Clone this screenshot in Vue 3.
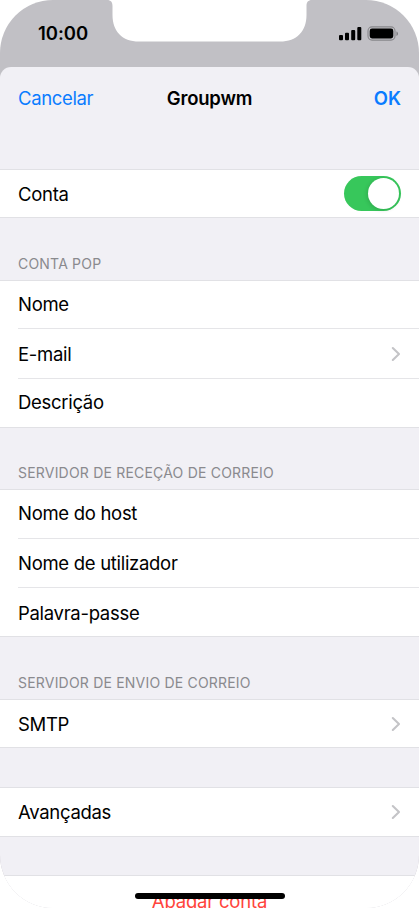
<script setup>
const groups = [
  { gap: 'g-first', title: '', rows: [{ label: 'Conta', kind: 'toggle', cls: 'r47' }] },
  {
    gap: 'g62', title: 'CONTA POP',
    rows: [
      { label: 'Nome', cls: 'r47 up' },
      { label: 'E-mail', kind: 'link', cls: 'r49' },
      { label: 'Descrição', cls: 'r48 up' },
    ],
  },
  {
    gap: 'g61', title: 'SERVIDOR DE RECEÇÃO DE CORREIO',
    rows: [
      { label: 'Nome do host', cls: 'r48 up' },
      { label: 'Nome de utilizador', cls: 'r48' },
      { label: 'Palavra-passe', cls: 'r48 down' },
    ],
  },
  { gap: 'g62', title: 'SERVIDOR DE ENVIO DE CORREIO', rows: [{ label: 'SMTP', kind: 'link', cls: 'r47' }] },
  { gap: 'g39', title: '', rows: [{ label: 'Avançadas', kind: 'link', cls: 'r48' }] },
]
</script>

<template>
  <div class="phone">
    <svg class="notch" width="210" height="43" viewBox="0 0 210 43">
      <path d="M2 0C6 0 7.500 2.200 7.500 6V15C7.500 31 17 41.600 34 41.600H175C192 41.600 201.500 31 201.500 15V6C201.500 2.200 203 0 207 0Z" fill="#fff" />
    </svg>
    <header class="status">
      <span class="time">10:00</span>
      <svg class="indicators" width="60" height="16" viewBox="0 0 60 16">
        <rect x="0" y="9" width="4" height="5.200" rx="1" />
        <rect x="6" y="6.800" width="4" height="7.400" rx="1" />
        <rect x="12.200" y="4" width="4" height="10.200" rx="1" />
        <rect x="18.300" y="0.900" width="4" height="13.300" rx="1" />
        <rect x="29" y="0.900" width="27" height="13.200" rx="4" fill="none" stroke="#87868a" stroke-width="1.100" />
        <rect x="30.700" y="2.600" width="23.600" height="9.800" rx="2.300" />
        <path d="M57.500 5.500C59.400 6.200 59.400 9.200 57.500 9.900Z" fill="#77767a" />
      </svg>
    </header>
    <main class="sheet">
      <nav class="bar">
        <span class="cancel">Cancelar</span>
        <h1>Groupwm</h1>
        <span class="ok">OK</span>
      </nav>
      <section v-for="(g, i) in groups" :key="i">
        <div class="gap" :class="g.gap"><h2 v-if="g.title">{{ g.title }}</h2></div>
        <div class="card">
          <template v-for="(r, j) in g.rows" :key="r.label">
            <div v-if="j" class="sep"></div>
            <div class="row" :class="r.cls">
              <span class="label">{{ r.label }}</span>
              <span v-if="r.kind === 'toggle'" class="toggle"><i></i></span>
              <svg v-if="r.kind === 'link'" class="chev" width="10" height="16" viewBox="0 0 10 16">
                <path d="M1.800 2L8 8L1.800 14" fill="none" stroke="#c4c4c7" stroke-width="2.100" stroke-linecap="round" stroke-linejoin="round" />
              </svg>
            </div>
          </template>
        </div>
      </section>
      <div class="gap g38"></div>
      <div class="card last"><span>Apagar conta</span></div>
    </main>
    <div class="home"></div>
  </div>
</template>

<style>
body { background: #fff; }
</style>

<style scoped>
.phone {
  position: relative;
  width: 419px;
  height: 908px;
  overflow: hidden;
  border-radius: 53px;
  background: #c1c0c5;
  font-family: Inter, "Liberation Sans", sans-serif;
  font-size: 18.5px;
  letter-spacing: -0.3px;
  color: #000;
  white-space: nowrap;
}
.notch { position: absolute; left: 105px; top: 0; }
.status {
  box-sizing: border-box;
  height: 67px;
  padding: 22px 20px 0 38px;
  display: flex;
  justify-content: space-between;
  align-items: flex-start;
}
.time { font-weight: 600; line-height: 23px; letter-spacing: -0.05px; }
.indicators { margin-top: 3.500px; }
.sheet { height: 841px; background: #f1f0f5; border-radius: 11px 11px 0 0; }
.bar {
  box-sizing: border-box;
  height: 63px;
  padding: 0 18px 2px;
  display: grid;
  grid-template-columns: 1fr auto 1fr;
  align-items: center;
}
.cancel, .ok { color: #0a7cff; }
.cancel { letter-spacing: -0.35px; }
.ok { font-weight: 600; text-align: right; letter-spacing: 0; }
h1 { margin: 0; font-size: 18.5px; font-weight: 600; letter-spacing: -0.2px; }
.gap { box-sizing: border-box; padding: 0 18px 8px; display: flex; align-items: flex-end; }
.g-first { height: 39px; }
.g62 { height: 62px; }
.g61 { height: 61px; }
.g39 { height: 39px; }
.g38 { height: 38px; }
h2 { margin: 0; font-size: 14px; line-height: 17px; font-weight: 400; letter-spacing: 0.2px; color: #8a8a8e; }
.card { background: #fff; border-top: 1px solid #e1e1e5; border-bottom: 1px solid #e1e1e5; }
.row {
  box-sizing: border-box;
  padding: 0 18px;
  display: flex;
  align-items: center;
  justify-content: space-between;
}
.r47 { height: 47px; }
.r48 { height: 48px; }
.r49 { height: 49px; }
.up { padding-bottom: 2px; }
.down { padding-top: 2px; }
.sep { height: 1px; margin-left: 18px; background: #e5e5e8; }
.toggle {
  box-sizing: border-box;
  width: 57px;
  height: 35px;
  padding: 2px;
  border-radius: 18px;
  background: #37c75b;
  display: flex;
  justify-content: flex-end;
}
.toggle i { width: 31px; height: 31px; border-radius: 50%; background: #fff; box-shadow: -1px 1px 4px rgba(0, 0, 0, 0.14); }
.last { height: 60px; border-bottom: 0; text-align: center; color: #ff453c; letter-spacing: -0.2px; }
.last span { display: block; line-height: 23px; padding-top: 14px; }
.home { position: absolute; left: 135px; top: 893px; width: 150px; height: 6px; border-radius: 3px; background: #000; }
</style>
